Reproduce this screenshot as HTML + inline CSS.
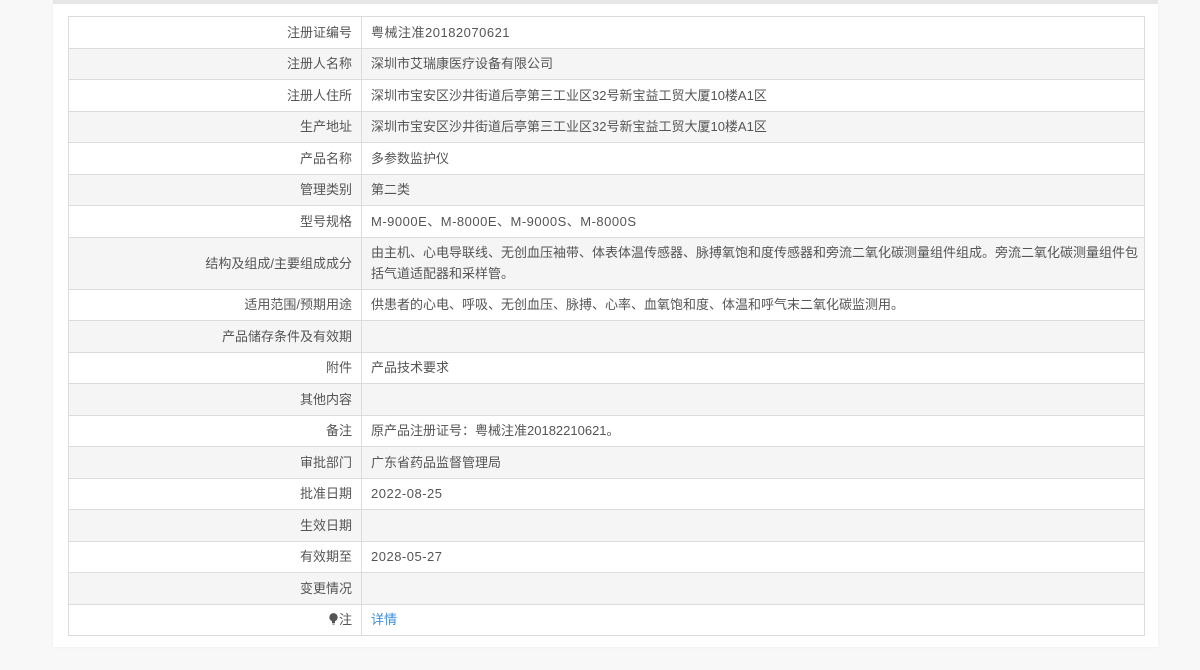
<!DOCTYPE html>
<html><head><meta charset="utf-8">
<style>
html,body{margin:0;padding:0;width:1200px;height:670px;background:#f8f8f8;overflow:hidden;font-family:"Liberation Sans","Noto Sans CJK SC",sans-serif;}
.topbar{position:absolute;left:53px;top:0;width:1105px;height:4px;background:#e6e6e6;}
.panel{position:absolute;left:53px;top:4px;width:1105px;height:643px;background:#fff;box-shadow:0 0 2px #e8e8e8;}
table{position:absolute;left:68px;top:16px;width:1077px;border-collapse:collapse;table-layout:fixed;font-size:13px;color:#555;}
td{border:1px solid #dcdcdc;height:30.5px;padding:0 9px;line-height:21px;}
td.l{text-align:right;}
tr:nth-child(even) td{background:#f5f5f5;}
tr.tall td{height:51px;}
a{color:#3d8fd8;text-decoration:none;}
.bulb{display:inline-block;width:9px;height:12px;vertical-align:-1px;margin-right:1px;}
.w{letter-spacing:0.5px;}
</style></head><body>
<div class="topbar"></div>
<div class="panel"></div>
<table>
<colgroup><col style="width:293px"><col></colgroup>
<tr><td class="l">注册证编号</td><td class="w">粤械注准20182070621</td></tr>
<tr><td class="l">注册人名称</td><td>深圳市艾瑞康医疗设备有限公司</td></tr>
<tr><td class="l">注册人住所</td><td>深圳市宝安区沙井街道后亭第三工业区32号新宝益工贸大厦10楼A1区</td></tr>
<tr><td class="l">生产地址</td><td>深圳市宝安区沙井街道后亭第三工业区32号新宝益工贸大厦10楼A1区</td></tr>
<tr><td class="l">产品名称</td><td>多参数监护仪</td></tr>
<tr><td class="l">管理类别</td><td>第二类</td></tr>
<tr><td class="l">型号规格</td><td class="w">M-9000E、M-8000E、M-9000S、M-8000S</td></tr>
<tr class="tall"><td class="l">结构及组成/主要组成成分</td><td style="white-space:nowrap;overflow:hidden">由主机、心电导联线、无创血压袖带、体表体温传感器、脉搏氧饱和度传感器和旁流二氧化碳测量组件组成。旁流二氧化碳测量组件包<br>括气道适配器和采样管。</td></tr>
<tr><td class="l">适用范围/预期用途</td><td>供患者的心电、呼吸、无创血压、脉搏、心率、血氧饱和度、体温和呼气末二氧化碳监测用。</td></tr>
<tr><td class="l">产品储存条件及有效期</td><td></td></tr>
<tr><td class="l">附件</td><td>产品技术要求</td></tr>
<tr><td class="l">其他内容</td><td></td></tr>
<tr><td class="l">备注</td><td>原产品注册证号：粤械注准20182210621。</td></tr>
<tr><td class="l">审批部门</td><td>广东省药品监督管理局</td></tr>
<tr><td class="l">批准日期</td><td class="w">2022-08-25</td></tr>
<tr><td class="l">生效日期</td><td></td></tr>
<tr><td class="l">有效期至</td><td class="w">2028-05-27</td></tr>
<tr><td class="l">变更情况</td><td></td></tr>
<tr><td class="l"><svg class="bulb" viewBox="0 0 9 12"><circle cx="4.5" cy="4.3" r="4.2" fill="#555"/><rect x="3" y="8" width="3" height="2" fill="#555"/><rect x="3.3" y="10.5" width="2.4" height="1.2" fill="#777"/></svg>注</td><td><a>详情</a></td></tr>
</table>
</body></html>
